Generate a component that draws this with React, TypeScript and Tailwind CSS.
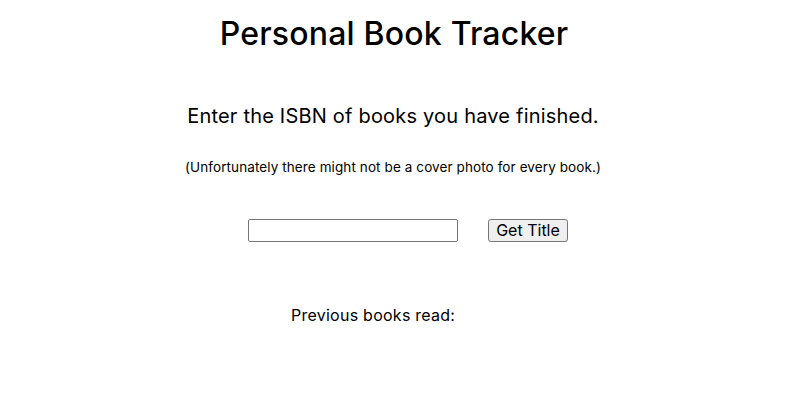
const App = () => {
  return (
    <div className="min-h-[416px] w-[794px] bg-white text-black font-['Inter',sans-serif]">
      <div className="flex flex-col items-center">
        <h1 className="mt-[14px] ml-[-6px] text-[32px] leading-[40px] font-medium tracking-[0.2px]">
          Personal Book Tracker
        </h1>
        <p className="mt-[48px] ml-[-8px] text-[20px] leading-[28px] tracking-[0.2px]">
          Enter the ISBN of books you have finished.
        </p>
        <p className="mt-[27px] ml-[-8px] text-[13.5px] leading-[20px] tracking-[0.1px]">
          (Unfortunately there might not be a cover photo for every book.)
        </p>
      </div>
      <div className="mt-[42px] flex items-center pl-[248px]">
        <input
          type="text"
          className="h-[23px] w-[210px] border border-[#767676] rounded-[2px] bg-white"
        />
        <button className="ml-[30px] h-[23px] w-[80px] border border-[#767676] rounded-[3px] bg-[#efefef] text-[16px] leading-[19px] pb-[1px]">
          Get Title
        </button>
      </div>
      <p className="mt-[61px] pl-[291px] text-[16px] leading-[24px] tracking-[0.25px]">
        Previous books read:
      </p>
    </div>
  );
};

export default App;
